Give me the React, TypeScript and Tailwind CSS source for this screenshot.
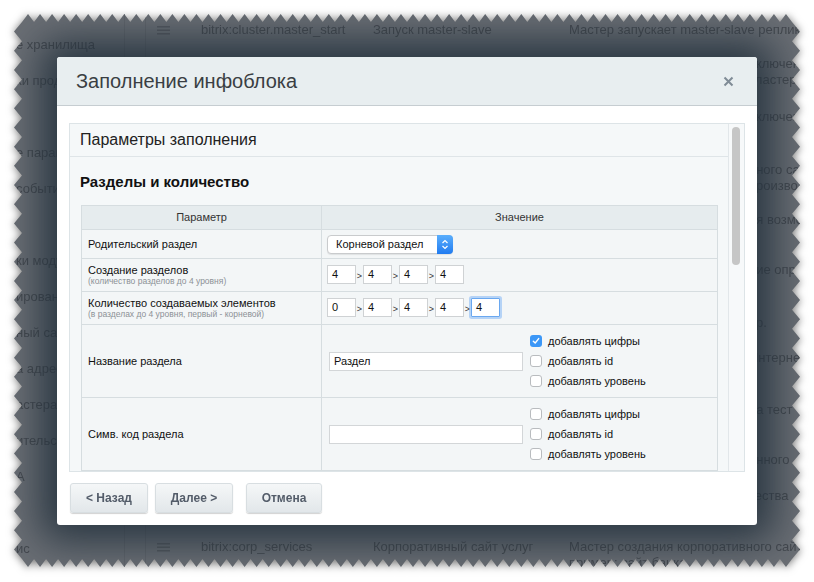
import React from "react";

// torn paper edge for the screenshot frame
function tornEdge() {
	const L = 14, T = 14, R = 800, B = 567, d = 8;
	const pts: [number, number][] = [];
	const n = Math.round((R - L - 2 * d) / 12);
	const sx = (R - L - 2 * d) / (2 * n);
	const m = Math.round((B - T - 2 * d) / 19);
	const sy = (B - T - 2 * d) / (2 * m);
	for (let i = 0; i <= 2 * n; i++) pts.push([L + d + i * sx, i % 2 ? T : T + d]);
	for (let j = 1; j <= 2 * m; j++) pts.push([j % 2 ? R : R - d, T + d + j * sy]);
	for (let i = 2 * n - 1; i >= 0; i--) pts.push([L + d + i * sx, i % 2 ? B : B - d]);
	for (let j = 2 * m - 1; j >= 1; j--) pts.push([j % 2 ? L : L + d, T + d + j * sy]);
	return `polygon(${pts.map((p) => `${p[0]}px ${p[1]}px`).join(",")})`;
}

const sideItems = [
	"е хранилища",
	"ки продаж",
	"",
	"е параметры",
	"события",
	"",
	"ки модулей",
	"ирование",
	"ный сайт",
	"а адреса",
	"астера",
	"ительство",
	"А",
	"",
	"ис",
];

const bgRows = [
	{ h: "h-[34px]", code: "bitrix:cluster.master_start", title: "Запуск master-slave", desc: ["Мастер запускает master-slave репликацию"], frag: [] },
	{ h: "h-[53px]", frag: ["включения", "кластера"] },
	{ h: "h-[53px]", frag: ["включения"] },
	{ h: "h-[50px]", frag: ["нного сайта", "производителя"] },
	{ h: "h-[50px]", frag: ["ия возможности"] },
	{ h: "h-[53px]", frag: ["ние опр."] },
	{ h: "h-[35px]", frag: ["пр."] },
	{ h: "h-[52px]", frag: [" Интернет"] },
	{ h: "h-[50px]", frag: ["на тест"] },
	{ h: "h-[36px]", frag: ["енного"] },
	{ h: "h-[51px]", frag: ["тества"] },
	{ h: "h-[51px]", code: "bitrix:corp_services", title: "Корпоративный сайт услуг", desc: ["Мастер создания корпоративного сайта", "пример: сайт банка"], frag: [] },
];

function Burger() {
	return (
		<svg width="13" height="9" viewBox="0 0 13 9">
			<rect x="0" y="0" width="13" height="1.5" fill="#55595f" />
			<rect x="0" y="3.5" width="13" height="1.5" fill="#55595f" />
			<rect x="0" y="7" width="13" height="1.5" fill="#55595f" />
		</svg>
	);
}

function NumInput({ value, focus }: { value: string; focus?: boolean }) {
	return (
		<div
			className={
				focus
					? "w-[29px] h-[19px] bg-white border border-[#6aa8f0] shadow-[0_0_0_2px_rgba(120,175,245,0.5)] rounded-[1px] pl-[4px] text-[11px] leading-[17px]"
					: "w-[29px] h-[19px] bg-white border border-[#cfd2d4] pl-[4px] text-[11px] leading-[17px]"
			}
		>
			{value}
		</div>
	);
}

function Gt() {
	return <span className="w-[7px] text-center text-[9px] leading-[19px] pt-[2px] text-[#333]">&gt;</span>;
}

function Check({ on, label }: { on?: boolean; label: string }) {
	return (
		<div className="flex items-center h-[20px]">
			{on ? (
				<div className="w-[12px] h-[12px] rounded-[3px] bg-[#3b97f7] flex items-center justify-center">
					<svg width="8" height="8" viewBox="0 0 8 8">
						<path d="M1.3 4.2 L3.2 6 L6.7 1.6" stroke="white" strokeWidth="1.4" fill="none" strokeLinecap="round" strokeLinejoin="round" />
					</svg>
				</div>
			) : (
				<div className="w-[12px] h-[12px] rounded-[3px] bg-white border border-[#b9bcbf]" />
			)}
			<span className="ml-[6px] text-[11px] text-[#111]">{label}</span>
		</div>
	);
}

export default function App() {
	return (
		<div className="w-[814px] h-[582px] bg-white overflow-hidden font-['Liberation_Sans',Arial,sans-serif]">
			<div className="w-[814px] h-[582px] [filter:drop-shadow(0_1px_4px_rgba(0,0,0,0.55))]">
				<div className="relative w-[814px] h-[582px] bg-[#6b6f75] flex overflow-hidden" style={{ clipPath: tornEdge() }}>
					{/* background page */}
					<div className="w-[125px] shrink-0 border-r border-[#62666c] pt-[27px] flex flex-col">
						{sideItems.map((t, i) => (
							<div key={i} className="h-[36px] flex items-center pl-[16px] text-[13px] text-[#45494f] whitespace-nowrap">
								{t}
							</div>
						))}
					</div>
					<div className="w-[21px] shrink-0 border-r border-[#62666c]" />
					<div className="flex-1 pt-[20px] flex flex-col text-[13px] leading-[16px] text-[#45494f] whitespace-nowrap">
						{bgRows.map((r, i) => (
							<div key={i} className={`${r.h} shrink-0 grid grid-cols-[43px_172px_196px_1fr] pt-[2px]`}>
								<div className="pl-[11px] pt-[4px]">{r.code && <Burger />}</div>
								<div className="pl-[12px]">{r.code}</div>
								<div className="pl-[12px]">{r.title}</div>
								<div className="pl-[12px]">
									{r.desc?.map((l, k) => (
										<div key={k}>{l}</div>
									))}
									{r.frag.map((l, k) => (
										<div key={k} className="pl-[180px]">
											{l}
										</div>
									))}
								</div>
							</div>
						))}
					</div>

					{/* modal */}
					<div className="absolute left-[57px] top-[57px] w-[700px] h-[468px] bg-white rounded-[3px] shadow-[0_0_42px_16px_rgba(34,48,60,0.92)] flex flex-col">
						<div className="h-[49px] shrink-0 bg-[#e8eef0] border-b border-[#c6cdd1] rounded-t-[3px] flex items-center justify-between pl-[19px] pr-[23px]">
							<span className="text-[20px] text-[#3a3e43]">Заполнение инфоблока</span>
							<svg width="11" height="11" viewBox="0 0 11 11">
								<path d="M1.5 1.5 L9.5 9.5 M9.5 1.5 L1.5 9.5" stroke="#7f8b96" strokeWidth="2" />
							</svg>
						</div>
						<div className="px-[12px] pt-[17px]">
							<div className="h-[349px] border border-[#dde4e7] bg-[#f5f8f9] flex overflow-hidden">
								<div className="flex-1 flex flex-col">
									<div className="h-[33px] shrink-0 border-b border-[#dfe5e8] pl-[10px] flex items-center text-[16px] text-[#222]">
										Параметры заполнения
									</div>
									<div className="pt-[15px] pl-[10px] text-[15px] leading-[20px] font-bold text-[#111]">Разделы и количество</div>
									<table className="mt-[13px] ml-[11px] w-[637px] border-collapse text-[11px] text-[#111]">
										<tbody>
											<tr className="h-[24px] bg-[#e6ecee] text-[#333]">
												<td className="w-[240px] border border-[#d6dde0] text-center">Параметр</td>
												<td className="border border-[#d6dde0] text-center">Значение</td>
											</tr>
											<tr className="h-[29px] bg-[#f3f6f7]">
												<td className="border border-[#d6dde0] pl-[6px]">Родительский раздел</td>
												<td className="border border-[#d6dde0] pl-[5px]">
													<div className="w-[126px] h-[19px] rounded-[4px] bg-white border border-[#c9cbcd] flex items-center justify-between shadow-[0_1px_1px_rgba(0,0,0,0.08)]">
														<span className="pl-[8px] text-[11px] text-[#111]">Корневой раздел</span>
														<div className="w-[16px] h-[19px] -mr-px rounded-r-[4px] bg-gradient-to-b from-[#5aaefc] to-[#1f7bf0] flex items-center justify-center">
															<svg width="8" height="11" viewBox="0 0 8 11">
																<path d="M1.5 4 L4 1.5 L6.5 4 M1.5 7 L4 9.5 L6.5 7" stroke="white" strokeWidth="1.2" fill="none" />
															</svg>
														</div>
													</div>
												</td>
											</tr>
											<tr className="h-[33px] bg-[#f3f6f7]">
												<td className="border border-[#d6dde0] pl-[6px] leading-[12px]">
													<div>Создание разделов</div>
													<div className="text-[8.5px] leading-[10px] text-[#8c9196]">(количество разделов до 4 уровня)</div>
												</td>
												<td className="border border-[#d6dde0] pl-[5px]">
													<div className="flex">
														<NumInput value="4" />
														<Gt />
														<NumInput value="4" />
														<Gt />
														<NumInput value="4" />
														<Gt />
														<NumInput value="4" />
													</div>
												</td>
											</tr>
											<tr className="h-[33px] bg-[#f3f6f7]">
												<td className="border border-[#d6dde0] pl-[6px] leading-[12px]">
													<div>Количество создаваемых элементов</div>
													<div className="text-[8.5px] leading-[10px] text-[#8c9196]">(в разделах до 4 уровня, первый - корневой)</div>
												</td>
												<td className="border border-[#d6dde0] pl-[5px]">
													<div className="flex">
														<NumInput value="0" />
														<Gt />
														<NumInput value="4" />
														<Gt />
														<NumInput value="4" />
														<Gt />
														<NumInput value="4" />
														<Gt />
														<NumInput value="4" focus />
													</div>
												</td>
											</tr>
											<tr className="h-[73px] bg-[#f3f6f7]">
												<td className="border border-[#d6dde0] pl-[6px]">Название раздела</td>
												<td className="border border-[#d6dde0] pl-[7px]">
													<div className="flex items-center">
														<div className="w-[194px] h-[19px] bg-white border border-[#d3d6d8] pl-[4px] leading-[17px]">Раздел</div>
														<div className="ml-[7px] flex flex-col">
															<Check on label="добавлять цифры" />
															<Check label="добавлять id" />
															<Check label="добавлять уровень" />
														</div>
													</div>
												</td>
											</tr>
											<tr className="h-[73px] bg-[#f3f6f7]">
												<td className="border border-[#d6dde0] pl-[6px]">Симв. код раздела</td>
												<td className="border border-[#d6dde0] pl-[7px]">
													<div className="flex items-center">
														<div className="w-[194px] h-[19px] bg-white border border-[#d3d6d8]" />
														<div className="ml-[7px] flex flex-col">
															<Check label="добавлять цифры" />
															<Check label="добавлять id" />
															<Check label="добавлять уровень" />
														</div>
													</div>
												</td>
											</tr>
										</tbody>
									</table>
								</div>
								<div className="w-[16px] shrink-0 border-l border-[#e2e7ea] bg-[#f7f9fa] pt-[3px] pl-[3px]">
									<div className="w-[8px] h-[138px] rounded-full bg-[#c6c6c6]" />
								</div>
							</div>
						</div>
						<div className="flex pl-[13px] pt-[11px]">
							{[
								{ t: "< Назад", w: "w-[78px]", m: "" },
								{ t: "Далее >", w: "w-[78px]", m: "ml-[7px]" },
								{ t: "Отмена", w: "w-[76px]", m: "ml-[13px]" },
							].map((b) => (
								<div
									key={b.t}
									className={`${b.w} ${b.m} h-[30px] rounded-[3px] bg-gradient-to-b from-[#f5f7f8] to-[#e2e7ea] border border-[#d8dee1] shadow-[0_1px_1px_rgba(0,0,0,0.18)] flex items-center justify-center text-[12px] font-bold text-[#535c69]`}
								>
									{b.t}
								</div>
							))}
						</div>
					</div>
				</div>
			</div>
		</div>
	);
}
